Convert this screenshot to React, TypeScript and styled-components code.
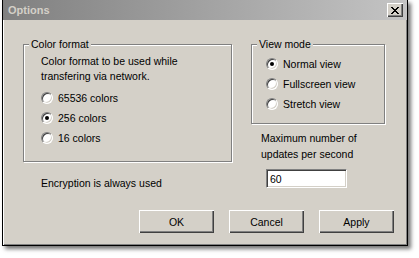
import React from 'react';
import styled, { createGlobalStyle } from 'styled-components';

const GlobalStyle = createGlobalStyle`
  html, body {
    margin: 0;
    padding: 0;
    background: #ffffff;
  }
  body {
    font-family: "Liberation Sans", Arial, sans-serif;
    font-size: 10.5px;
    color: #000;
  }
`;

const Page = styled.div`
  width: 419px;
  height: 258px;
  padding-left: 2px;
  box-sizing: border-box;
`;

const Window = styled.div`
  width: 406px;
  height: 246px;
  box-sizing: border-box;
  background: #d4d0c8;
  border: 1px solid #000;
  border-top: none;
  box-shadow: inset 1px 0 0 #ffffff, inset -1px -1px 0 #808080,
    3px 3px 4px rgba(0, 0, 0, 0.55);
  display: flex;
  flex-direction: column;
`;

const TitleBar = styled.div`
  height: 20px;
  display: flex;
  align-items: center;
  justify-content: space-between;
  padding: 0 4px 0 4px;
  background: linear-gradient(to right, #808080, #c4c4c4);
`;

const Title = styled.span`
  font-weight: bold;
  font-size: 11px;
  color: #d4d0c8;
  padding-left: 1px;
`;

const CloseButton = styled.div`
  width: 16px;
  height: 14px;
  box-sizing: border-box;
  background: #d4d0c8;
  box-shadow: inset 1px 1px 0 #ffffff, inset -1px -1px 0 #404040,
    inset -2px -2px 0 #808080;
  display: flex;
  align-items: center;
  justify-content: center;
`;

const Body = styled.div`
  flex: 1;
  display: flex;
  flex-direction: column;
  padding: 24px 13px 0 20px;
`;

const Columns = styled.div`
  display: flex;
  gap: 19px;
`;

const Column = styled.div<{ $width: number }>`
  width: ${p => p.$width}px;
  display: flex;
  flex-direction: column;
`;

const Group = styled.div<{ $pad: string }>`
  position: relative;
  border: 1px solid #808080;
  box-shadow: inset 1px 1px 0 #ffffff, 1px 1px 0 #ffffff;
  padding: ${p => p.$pad};
`;

const GroupTitle = styled.span`
  position: absolute;
  top: -7px;
  left: 5px;
  padding: 0 2px;
  background: #d4d0c8;
  line-height: 13px;
`;

const Description = styled.div`
  line-height: 15px;
  margin-bottom: 4px;
`;

const RadioRow = styled.div`
  height: 20px;
  display: flex;
  align-items: center;
  gap: 5px;
`;

const RadioCircle = styled.span<{ $checked?: boolean }>`
  width: 12px;
  height: 12px;
  box-sizing: border-box;
  border-radius: 50%;
  background: #ffffff;
  border: 1px solid;
  border-color: #808080 #ffffff #ffffff #808080;
  box-shadow: inset 1px 1px 0 #404040, inset -1px -1px 0 #d4d0c8;
  display: flex;
  align-items: center;
  justify-content: center;
  &::after {
    content: '';
    width: 4px;
    height: 4px;
    border-radius: 50%;
    background: ${p => (p.$checked ? '#000' : 'transparent')};
  }
`;

const Note = styled.div<{ $indent: number; $top: number }>`
  padding-left: ${p => p.$indent}px;
  margin-top: ${p => p.$top}px;
  line-height: 16px;
`;

const NumberInput = styled.div`
  margin: 7px 0 0 15px;
  width: 81px;
  height: 19px;
  box-sizing: border-box;
  background: #ffffff;
  border: 1px solid;
  border-color: #808080 #ffffff #ffffff #808080;
  box-shadow: inset 1px 1px 0 #404040, inset -1px -1px 0 #d4d0c8;
  padding: 0 3px;
  display: flex;
  align-items: center;
`;

const ButtonRow = styled.div`
  display: flex;
  justify-content: flex-end;
  gap: 15px;
  margin-top: auto;
  margin-bottom: 12px;
`;

const Button = styled.div`
  width: 75px;
  height: 23px;
  box-sizing: border-box;
  background: #d4d0c8;
  box-shadow: inset 1px 1px 0 #ffffff, inset -1px -1px 0 #404040,
    inset -2px -2px 0 #808080;
  display: flex;
  align-items: center;
  justify-content: center;
`;

const Radio = ({ label, checked }: { label: string; checked?: boolean }) => (
  <RadioRow>
    <RadioCircle $checked={checked} />
    <span>{label}</span>
  </RadioRow>
);

export default function App() {
  return (
    <>
      <GlobalStyle />
      <Page>
        <Window>
          <TitleBar>
            <Title>Options</Title>
            <CloseButton>
              <svg width="8" height="7" viewBox="0 0 8 7">
                <path d="M0 0L7 7M1 0L8 7M7 0L0 7M8 0L1 7" stroke="#000" strokeWidth="1" />
              </svg>
            </CloseButton>
          </TitleBar>
          <Body>
            <Columns>
              <Column $width={209}>
                <Group $pad="9px 0 13px 17px">
                  <GroupTitle>Color format</GroupTitle>
                  <Description>
                    Color format to be used while
                    <br />
                    transfering via network.
                  </Description>
                  <Radio label="65536 colors" />
                  <Radio label="256 colors" checked />
                  <Radio label="16 colors" />
                </Group>
                <Note $indent={18} $top={13}>Encryption is always used</Note>
              </Column>
              <Column $width={134}>
                <Group $pad="9px 0 9px 14px">
                  <GroupTitle>View mode</GroupTitle>
                  <Radio label="Normal view" checked />
                  <Radio label="Fullscreen view" />
                  <Radio label="Stretch view" />
                </Group>
                <Note $indent={10} $top={6}>
                  Maximum number of
                  <br />
                  updates per second
                </Note>
                <NumberInput>60</NumberInput>
              </Column>
            </Columns>
            <ButtonRow>
              <Button>OK</Button>
              <Button>Cancel</Button>
              <Button>Apply</Button>
            </ButtonRow>
          </Body>
        </Window>
      </Page>
    </>
  );
}
